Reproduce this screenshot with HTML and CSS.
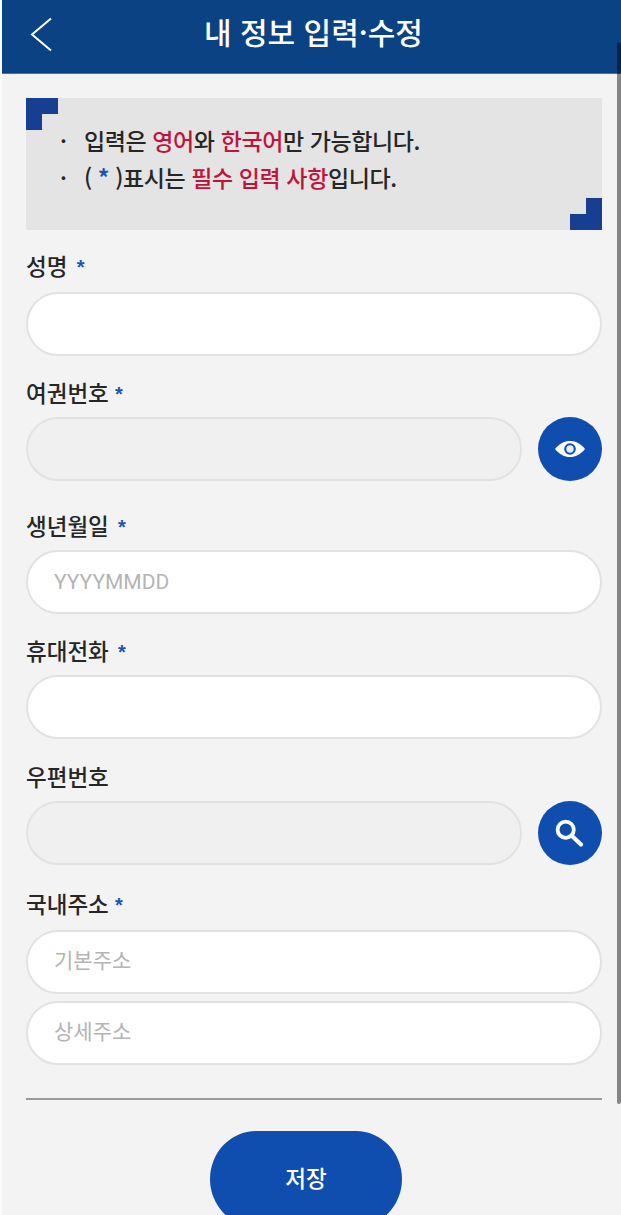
FILE: index.html
```html
<!DOCTYPE html>
<html lang="ko">
<head>
<meta charset="utf-8">
<title>내 정보 입력·수정</title>
<link rel="stylesheet" href="styles.css">
</head>
<body>
<div class="app">
  <header class="topbar">
    <svg class="back" viewBox="0 0 22 36" width="22" height="36"><path d="M21 1.500 2 17.500l19 16" fill="none" stroke="#fff" stroke-width="2"/></svg>
    <h1>내 정보 입력·수정</h1>
  </header>
  <main class="content">
    <section class="notice">
      <span class="corner tl"></span>
      <span class="corner br"></span>
      <p><span class="dot">·</span>입력은 <em>영어</em>와 <em>한국어</em>만 가능합니다.</p>
      <p><span class="dot">·</span>( <b>*</b> )표시는 <em>필수 입력 사항</em>입니다.</p>
    </section>
    <div class="field name">
      <label>성명 <b class="star wide">*</b></label>
      <div class="row"><div class="input"></div></div>
    </div>
    <div class="field passport">
      <label>여권번호 <b class="star">*</b></label>
      <div class="row">
        <div class="input off"></div>
        <span class="round"><svg viewBox="0 0 30 16" width="30" height="16"><path d="M0 8C4.500 2.500 9.500 0 15 0s10.500 2.500 15 8c-4.500 5.500-9.500 8-15 8S4.500 13.500 0 8z" fill="#fff"/><circle cx="15" cy="8" r="5.800" fill="#0f4eaf"/><circle cx="15" cy="8" r="3.700" fill="#e8ecf4"/></svg></span>
      </div>
    </div>
    <div class="field birth">
      <label>생년월일 <b class="star wide">*</b></label>
      <div class="row"><div class="input latin">YYYYMMDD</div></div>
    </div>
    <div class="field phone">
      <label>휴대전화 <b class="star wide">*</b></label>
      <div class="row"><div class="input"></div></div>
    </div>
    <div class="field zip">
      <label>우편번호</label>
      <div class="row">
        <div class="input off"></div>
        <span class="round"><svg viewBox="0 0 30 30" width="30" height="30"><circle cx="10.700" cy="11.700" r="8.100" fill="none" stroke="#fff" stroke-width="3.800"/><path d="M17 18l9 8.500" stroke="#fff" stroke-width="4.200" stroke-linecap="round"/></svg></span>
      </div>
    </div>
    <div class="field addr">
      <label>국내주소 <b class="star">*</b></label>
      <div class="row"><div class="input">기본주소</div></div>
      <div class="row second"><div class="input">상세주소</div></div>
    </div>
    <hr class="rule">
    <div class="actions"><button class="save" type="button">저장</button></div>
  </main>
  <div class="scrollbar"></div>
</div>
</body>
</html>
```
FILE: styles.css
```css
* { box-sizing: border-box; }
html, body { margin: 0; height: 100%; overflow: hidden; }
body { font-family: "Noto Sans CJK KR", "Liberation Sans", sans-serif; background: #fbfbfb; color: #222; }
.app { position: relative; height: 1215px; margin-left: 2px; background: #f3f3f3; overflow: hidden; }
.topbar { height: 74px; background: #0b4283; border-bottom: 1px solid #3f6fc0; position: relative; display: flex; align-items: center; justify-content: center; padding-left: 4px; }
.back { position: absolute; left: 28px; top: 17px; }
.topbar h1 { margin: 0 0 12px; color: #fff; font-size: 30px; font-weight: 500; line-height: 40px; }
.content { padding: 24px 19px 0 24px; }
.notice { position: relative; height: 132px; background: #e4e4e4; padding: 24px 0 0 34px; }
.notice p { margin: 0; font-size: 23px; font-weight: 500; line-height: 37px; height: 37px; color: #262626; letter-spacing: -0.4px; }
.dot { display: inline-block; width: 24px; }
.notice em { font-style: normal; font-weight: 500; color: #c0143c; }
.notice b { color: #1a55b5; font-weight: 700; }
.corner { position: absolute; background: #163f91; width: 32px; height: 32px; }
.corner.tl { left: 0; top: 0; clip-path: polygon(0 0, 100% 0, 100% 50%, 50% 50%, 50% 100%, 0 100%); }
.corner.br { right: 0; bottom: 0; clip-path: polygon(50% 0, 100% 0, 100% 100%, 0 100%, 0 50%, 50% 50%); }
.field { margin-top: 18px; }
.field label { display: block; font-size: 22.500px; line-height: 36px; height: 36px; font-weight: 500; color: #262626; margin-bottom: 7px; white-space: nowrap; }
.field.name { margin-top: 17px; }
.field.name label, .field.addr label { margin-bottom: 9px; }
.field.birth { margin-top: 26px; }
.field.phone { margin-top: 18px; }
.field.zip { margin-top: 19px; }
.field.addr { margin-top: 20px; }
.star { color: #1a55b5; font-family: "Liberation Sans", sans-serif; font-size: 20px; font-weight: 700; margin-left: 0; position: relative; top: -1px; }
.star.wide { margin-left: 3px; }
.row { display: flex; align-items: center; gap: 16px; }
.row.second { margin-top: 7px; }
.input { flex: 1; height: 64px; border-radius: 32px; background: #fff; border: 2px solid #e2e2e2; padding-left: 26px; font-size: 21px; line-height: 54px; color: #b4b4b4; font-family: "Noto Sans CJK KR", sans-serif; }
.input.latin { font-family: Roboto, sans-serif; font-size: 21px; line-height: 60px; }
.input.off { background: #f0f0f0; }
.round { flex: none; width: 64px; height: 64px; border-radius: 50%; background: #0f4eaf; display: flex; align-items: center; justify-content: center; }
.rule { border: 0; height: 2px; background: #9a9a9a; margin: 33px 0 0; }
.actions { display: flex; justify-content: center; padding: 31px 16px 0 0; }
.save { width: 192px; height: 96px; border: 0; border-radius: 46px / 48px; background: #0f4eaf; color: #fff; font: 500 22.500px "Noto Sans CJK KR", sans-serif; flex: none; padding: 0 0 4px; }
.scrollbar { position: absolute; right: 0; top: 42px; width: 4px; height: 1062px; background: rgba(0, 0, 0, 0.45); border-radius: 2px; }
```
